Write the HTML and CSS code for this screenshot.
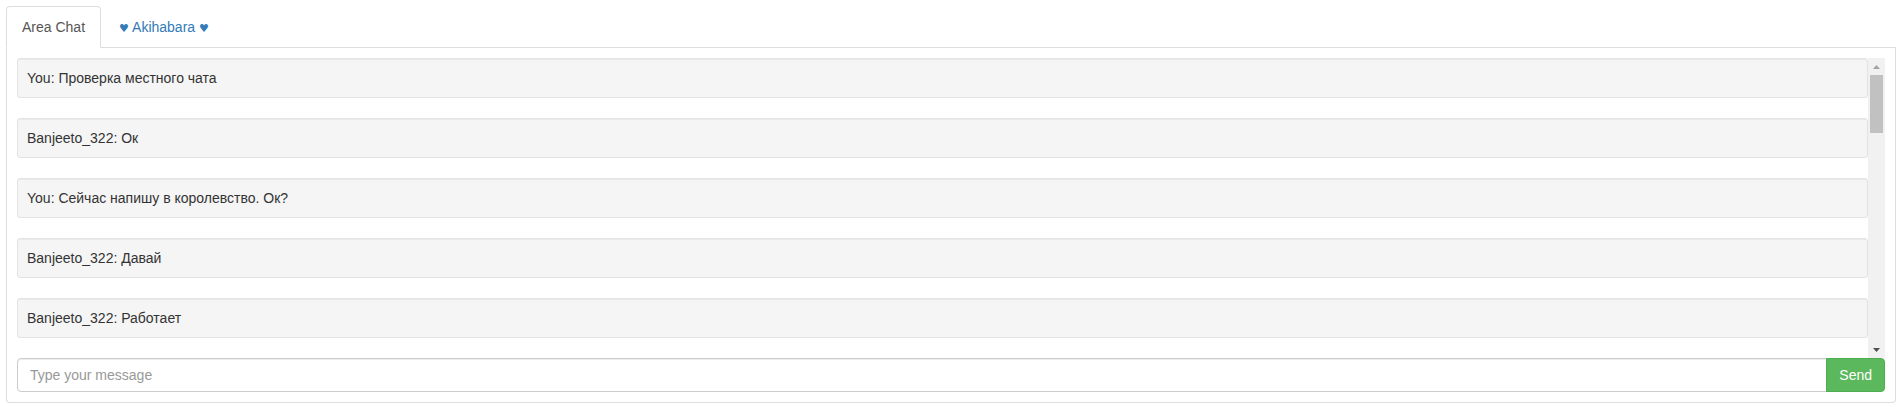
FILE: index.html
```html
<!DOCTYPE html>
<html lang="ru">
<head>
<meta charset="utf-8">
<title>Chat</title>
<link rel="stylesheet" href="styles.css">
</head>
<body>
<div class="chat">
  <ul class="tabs">
    <li class="tab active"><a href="#">Area Chat</a></li>
    <li class="tab"><a href="#"><span class="heart">♥</span> Akihabara <span class="heart">♥</span></a></li>
  </ul>
  <div class="pane">
    <div class="viewport">
      <div class="log">
        <div class="msg">You: Проверка местного чата</div>
        <div class="msg">Banjeeto_322: Ок</div>
        <div class="msg">You: Сейчас напишу в королевство. Ок?</div>
        <div class="msg">Banjeeto_322: Давай</div>
        <div class="msg">Banjeeto_322: Работает</div>
      </div>
      <div class="scrollbar">
        <div class="sb-btn">
          <svg width="7" height="4" viewBox="0 0 7 4"><polygon points="0,4 7,4 3.5,0" fill="#a3a3a3"/></svg>
        </div>
        <div class="sb-thumb"></div>
        <div class="sb-track"></div>
        <div class="sb-btn">
          <svg width="7" height="4" viewBox="0 0 7 4"><polygon points="0,0 7,0 3.5,4" fill="#505050"/></svg>
        </div>
      </div>
    </div>
    <div class="compose">
      <input class="field" type="text" placeholder="Type your message">
      <button class="send" type="button">Send</button>
    </div>
  </div>
</div>
</body>
</html>
```
FILE: styles.css
```css
html, body {
  margin: 0;
  background: #fff;
}
body {
  padding: 6px 5px 6px 6px;
  font-family: "Liberation Sans", Arial, Helvetica, sans-serif;
  font-size: 14px;
  line-height: 20px;
  color: #333;
}
.tabs {
  display: flex;
  list-style: none;
  margin: 0;
  padding: 0;
  border-bottom: 1px solid #ddd;
}
.tab {
  margin-bottom: -1px;
  margin-right: 2px;
}
.tab a {
  display: block;
  height: 20px;
  padding: 10px 15px;
  line-height: 20px;
  border: 1px solid transparent;
  border-radius: 4px 4px 0 0;
  color: #337ab7;
  text-decoration: none;
}
.tab.active a {
  color: #555;
  background: #fff;
  border-color: #ddd #ddd transparent;
}
.heart {
  font-family: "DejaVu Sans", sans-serif;
  font-size: 11px;
  line-height: 1;
}
.pane {
  border: 1px solid #ddd;
  border-top: 0;
  border-radius: 0 0 4px 4px;
  padding: 10px;
}
.viewport {
  display: flex;
  height: 300px;
}
.log {
  flex: 1;
  min-width: 0;
  overflow: hidden;
}
.scrollbar {
  width: 17px;
  flex: none;
  display: flex;
  flex-direction: column;
  background: #f1f1f1;
}
.sb-btn {
  height: 17px;
  flex: none;
  display: flex;
  align-items: center;
  justify-content: center;
}
.sb-btn svg {
  display: block;
}
.sb-thumb {
  height: 58px;
  flex: none;
  margin: 0 2px;
  background: #c1c1c1;
}
.sb-track {
  flex: 1;
}
.msg {
  min-height: 20px;
  padding: 9px;
  margin-bottom: 20px;
  background: #f5f5f5;
  border: 1px solid #e3e3e3;
  border-radius: 3px;
  box-shadow: inset 0 1px 1px rgba(0, 0, 0, .05);
}
.compose {
  display: flex;
}
.field {
  flex: 1;
  min-width: 0;
  height: 34px;
  box-sizing: border-box;
  padding: 6px 12px;
  font-family: inherit;
  font-size: 14px;
  line-height: 20px;
  color: #555;
  background: #fff;
  border: 1px solid #ccc;
  border-radius: 4px 0 0 4px;
  box-shadow: inset 0 1px 1px rgba(0, 0, 0, .075);
  outline: none;
}
.field::placeholder {
  color: #999;
}
.send {
  margin-left: -1px;
  padding: 6px 12px;
  font-family: inherit;
  font-size: 14px;
  line-height: 20px;
  color: #fff;
  background: #5cb85c;
  border: 1px solid #4cae4c;
  border-radius: 0 4px 4px 0;
}
```
